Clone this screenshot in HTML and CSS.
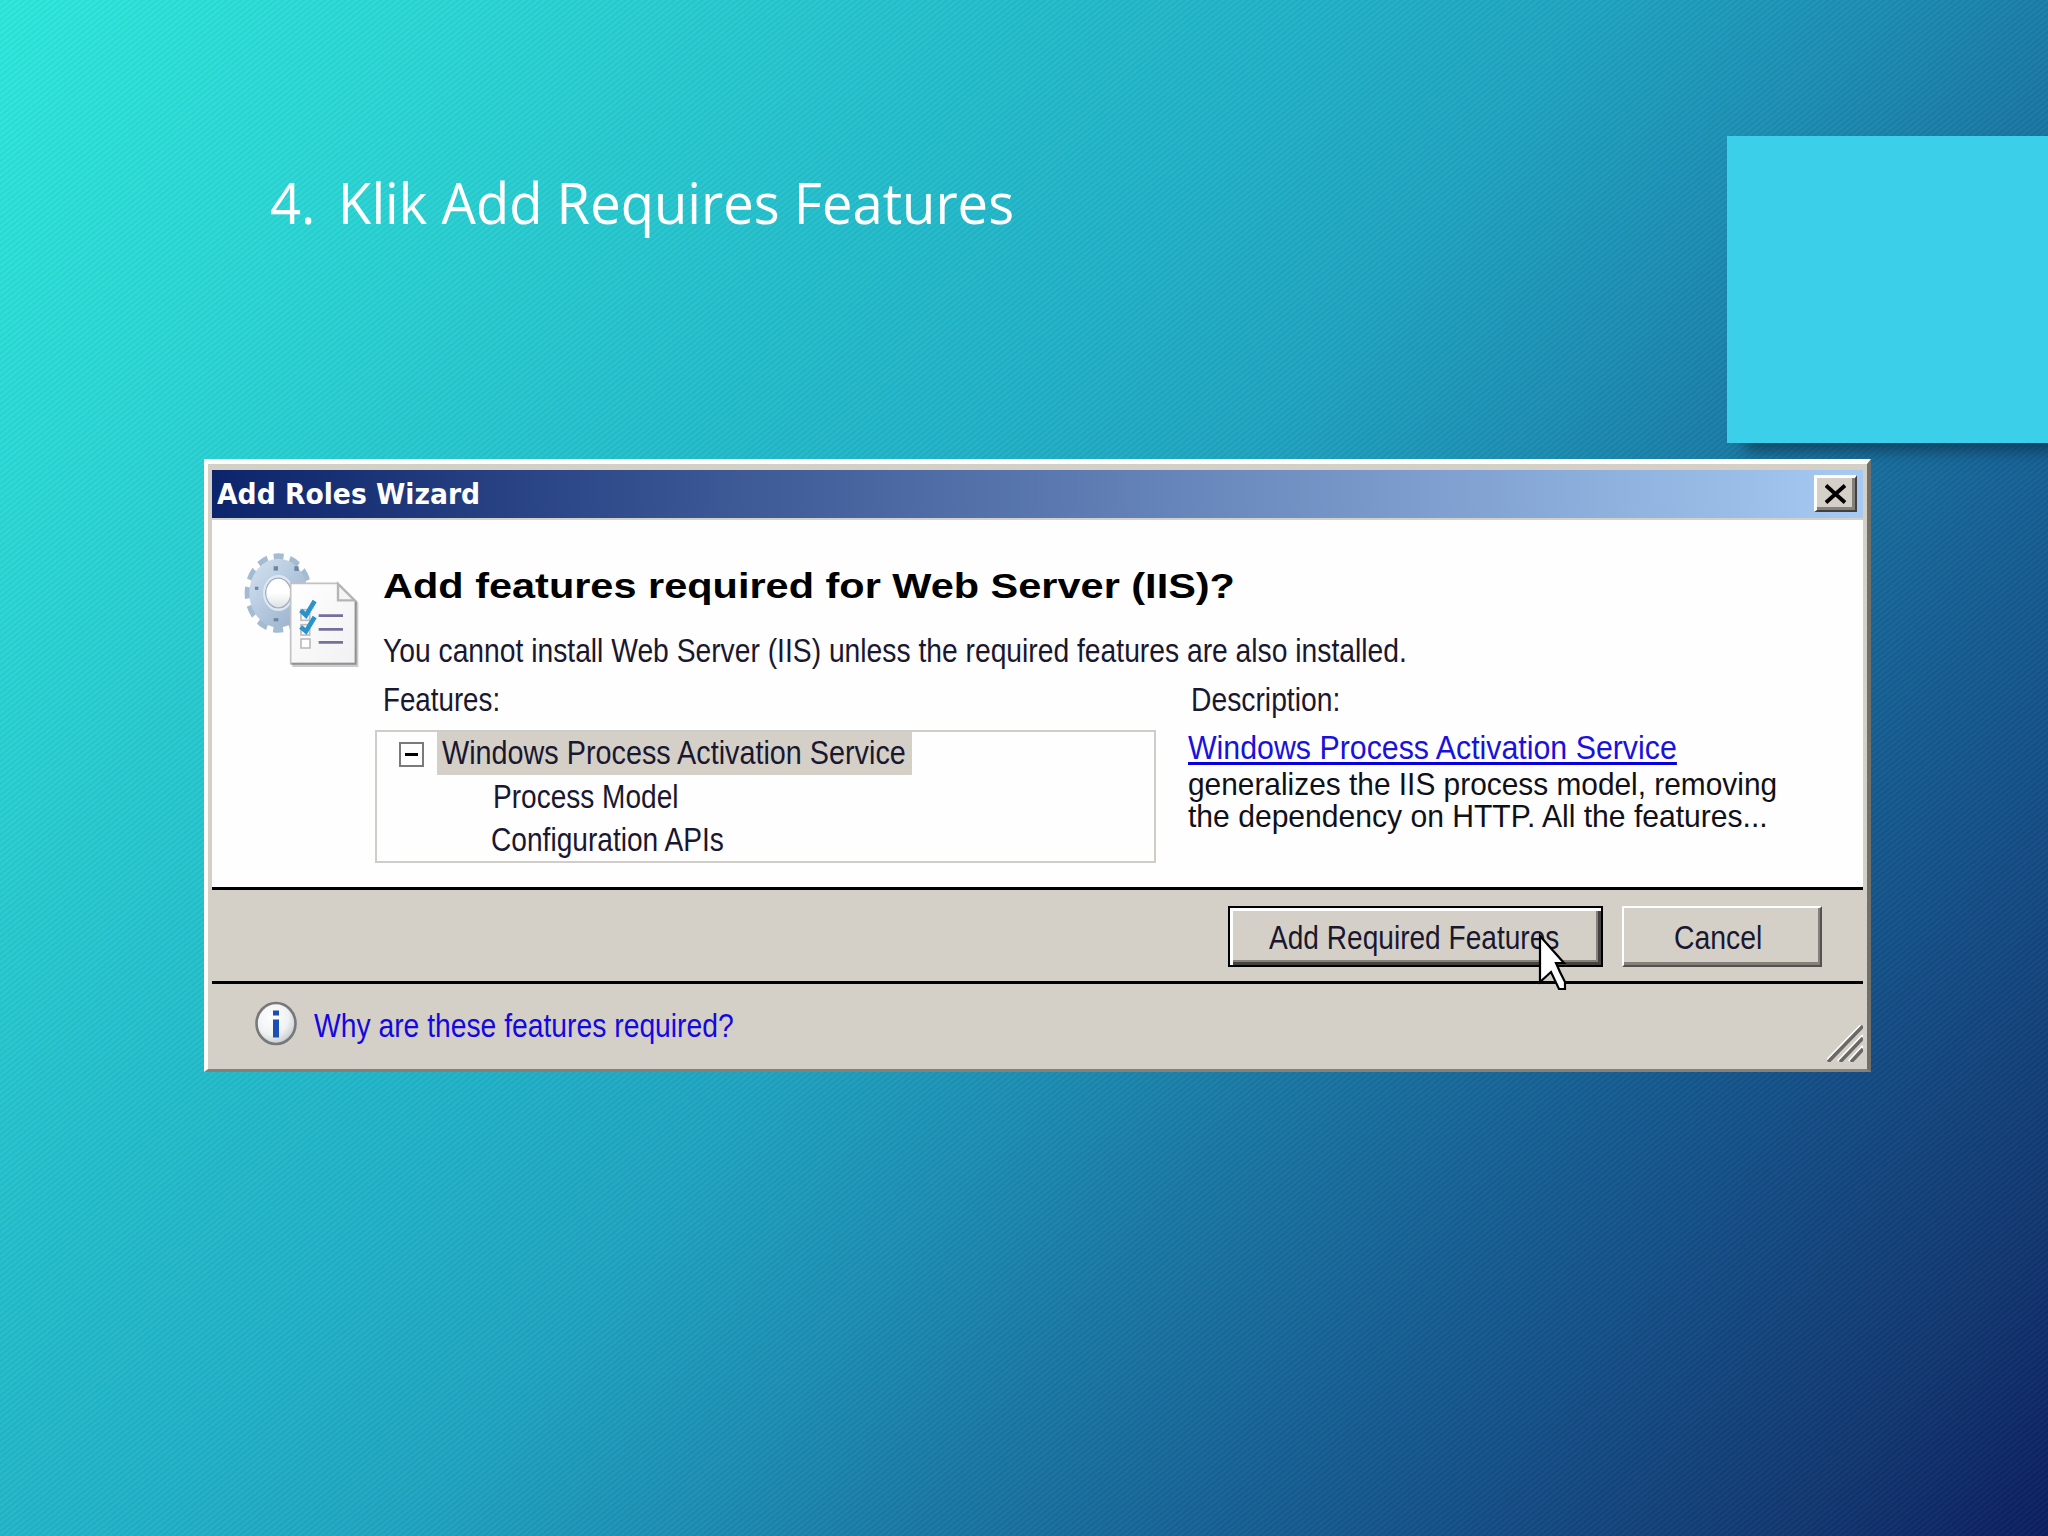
FILE: index.html
```html
<!DOCTYPE html>
<html lang="id">
<head>
<meta charset="utf-8">
<title>Add Requires Features</title>
<link rel="stylesheet" href="styles.css">
</head>
<body>
<main class="slide">
  <div class="accent"></div>
  <h1 class="slide-title"><span class="fit fit-title"><span class="number">4.</span> Klik Add Requires Features</span></h1>

  <section class="dialog">
    <header class="titlebar">
      <span class="fit fit-caption">Add Roles Wizard</span>
      <button class="close" aria-label="Close">
        <svg width="22" height="20" viewBox="0 0 22 20"><path d="M1 1.500L20 18.500M20 1.500L1 18.500" stroke="#000" stroke-width="3.800" fill="none"/></svg>
      </button>
    </header>

    <div class="body">
      <svg class="wizard-icon" width="140" height="140" viewBox="0 0 420 420">
        <defs>
          <linearGradient id="metal" x1="0" y1="0" x2="1" y2="1"><stop offset="0" stop-color="#cddcec"/><stop offset=".5" stop-color="#b3c8de"/><stop offset="1" stop-color="#9db4cd"/></linearGradient>
          <linearGradient id="paper" x1="0" y1="0" x2="1" y2="1"><stop offset="0" stop-color="#fff"/><stop offset="1" stop-color="#f1f1f3"/></linearGradient>
          <linearGradient id="hole" x1="0" y1="0" x2="0" y2="1"><stop offset=".5" stop-color="#fff"/><stop offset="1" stop-color="#dcdfe3"/></linearGradient>
        </defs>
        <g transform="translate(145 159) scale(1 1.180)">
          <circle r="91" fill="none" stroke="#a5bbd2" stroke-width="20" stroke-dasharray="29 18.650" transform="rotate(-9)"/>
          <circle r="64" fill="none" stroke="url(#metal)" stroke-width="46"/>
          <circle r="38" fill="url(#hole)" stroke="#9fb0c2" stroke-width="4"/>
          <circle r="43" fill="none" stroke="#dde7f0" stroke-width="6"/>
          <g fill="#6d859e"><rect x="-14" y="-68" width="13" height="11"/><rect x="-70" y="-16" width="10" height="8"/><rect x="-14" y="64" width="14" height="8"/><rect x="48" y="-68" width="13" height="12"/></g>
        </g>
        <path d="M187 137H331L385 188V381H187Z" fill="#999" opacity=".5"/>
        <path d="M182 130H324L377 184V371H182Z" fill="url(#paper)" stroke="#c2c2c2" stroke-width="5"/>
        <path d="M377 184V371H184" fill="none" stroke="#929292" stroke-width="6"/>
        <path d="M324 132V181H374Z" fill="#f5f5f5" stroke="#b4b4b4" stroke-width="7"/>
        <g fill="#fff" stroke="#bcbcbc" stroke-width="5"><rect x="213" y="209" width="26" height="32"/><rect x="213" y="254" width="26" height="31"/><rect x="213" y="297" width="27" height="27"/></g>
        <g fill="none" stroke="#2b93cb" stroke-width="14"><path d="M212 211L228 226L254 183"/><path d="M212 261L228 274L254 231"/></g>
        <path d="M266 227H339M266 268H339M266 307H339" stroke="#74709a" stroke-width="8"/>
      </svg>

      <div class="content">
        <h2 class="heading"><span class="fit fit-heading">Add features required for Web Server (IIS)?</span></h2>
        <p class="line message"><span class="fit fit-message">You cannot install Web Server (IIS) unless the required features are also installed.</span></p>
        <div class="columns">
          <div>
            <p class="line label"><span class="fit fit-features">Features:</span></p>
            <ul class="tree">
              <li class="row"><span class="toggle"></span><span class="selected"><span class="fit fit-node">Windows Process Activation Service</span></span></li>
              <li class="row child"><span class="fit fit-model">Process Model</span></li>
              <li class="row child"><span class="fit fit-config">Configuration APIs</span></li>
            </ul>
          </div>
          <div>
            <p class="line desc-label"><span class="fit fit-desc">Description:</span></p>
            <p class="line desc-link"><a class="fit fit-link">Windows Process Activation Service</a></p>
            <p class="desc-line"><span class="fit fit-d1">generalizes the IIS process model, removing</span></p>
            <p class="desc-line"><span class="fit fit-d2">the dependency on HTTP. All the features...</span></p>
          </div>
        </div>
      </div>
    </div>

    <div class="actions">
      <button class="btn primary"><span class="fit fit-add">Add Required Features</span></button>
      <button class="btn"><span class="fit fit-cancel">Cancel</span></button>
    </div>

    <footer class="help">
      <svg width="44" height="45" viewBox="0 0 44 45">
        <defs><radialGradient id="glass" cx=".4" cy=".35" r=".7"><stop offset="0" stop-color="#fff"/><stop offset=".6" stop-color="#f0f1f3"/><stop offset="1" stop-color="#c2c5ca"/></radialGradient></defs>
        <ellipse cx="22" cy="22.500" rx="19.500" ry="20.500" fill="url(#glass)" stroke="#77787a" stroke-width="2.600"/>
        <path d="M19 9.500h6v5h-6zM19 18.500h6v18h-6z" fill="#1c4fb4"/>
      </svg>
      <a class="help-link"><span class="fit fit-help">Why are these features required?</span></a>
      <svg class="grip" width="36" height="37" viewBox="0 0 36 37">
        <path d="M-1 36L36 -2M11 36L36 10M22 36L36 21" stroke="#fff" stroke-width="2.500"/>
        <path d="M1 37L36 1M13 37L36 13M24 37L36 24" stroke="#6b6966" stroke-width="3.600"/>
      </svg>
    </footer>
  </section>

  <svg class="cursor" width="32" height="60" viewBox="0 0 32 60">
    <path d="M2 3L26 30H18L22 39L27 49V56H21L13 39L2 49Z" fill="#fff" stroke="#000" stroke-width="2.200"/>
  </svg>
</main>
</body>
</html>
```

FILE: styles.css
```css
* { box-sizing: border-box; margin: 0; padding: 0; }

body { width: 2048px; height: 1536px; overflow: hidden; }

.slide {
  position: relative;
  width: 2048px;
  height: 1536px;
  padding: 162px 0 0 204px;
  background:
    repeating-linear-gradient(141deg, rgba(255,255,255,.04) 0, rgba(0,20,60,.05) 2.2px, rgba(255,255,255,.04) 4.4px),
    linear-gradient(128deg, #2ce9dc 0%, #28d1d2 18.5%, #22bdcb 32%, #20b3c8 40%, #1ea5c1 49%, #1b90b4 57%, #1878a3 65%, #156396 73%, #124b83 83%, #10366f 92%, #0a1c5e 100%);
  font-family: "Liberation Sans", Arial, sans-serif;
  color: #1a1730;
}

.accent {
  position: absolute;
  top: 136px;
  right: 0;
  width: 321px;
  height: 307px;
  background: #3ccfea;
  box-shadow: 14px 12px 14px -4px rgba(10,40,60,.6);
}

.fit { display: inline-block; white-space: pre; transform-origin: 0 50%; }
.fit-title { transform: scaleX(.954); }
.fit-caption { transform: scaleX(1.02); }
.fit-heading { transform: scaleX(1.185); }
.fit-message { transform: scaleX(.856); }
.fit-features { transform: scaleX(.84); }
.fit-node { transform: scaleX(.872); }
.fit-model { transform: scaleX(.85); }
.fit-config { transform: translateX(-2px) scaleX(.852); }
.fit-desc { transform: scaleX(.857); }
.fit-link { transform: scaleX(.919); }
.fit-d1 { transform: scaleX(.933); }
.fit-d2 { transform: scaleX(.94); }
.fit-add { transform: scaleX(.851); }
.fit-cancel { transform: scaleX(.86); }
.fit-help { transform: scaleX(.857); }

.slide-title {
  height: 80px;
  padding-left: 66px;
  font: 500 57px/80px "Open Sans", sans-serif;
  color: #fff;
}
.number { margin-right: 9px; }

.dialog {
  position: relative;
  width: 1667px;
  height: 613px;
  margin-top: 217px;
  padding: 6px 4px 4px 4px;
  background: #d4d0c8;
  border: solid;
  border-width: 5px 4px 3px 4px;
  border-color: #fdfdfb #716f6a #85817a #fdfdfb;
}

.titlebar {
  display: flex;
  align-items: center;
  justify-content: space-between;
  height: 48px;
  padding: 0 6px 0 5px;
  background: linear-gradient(90deg, #0c246b, #a6caf2);
  color: #fff;
  font: 700 29px/48px "DejaVu Sans Condensed", "DejaVu Sans", sans-serif;
}

.close {
  display: grid;
  place-items: center;
  width: 43px;
  height: 37px;
  margin-top: -2px;
  background: #d4d0c8;
  border: solid;
  border-width: 3px 2px 2px 3px;
  border-color: #fff #404040 #404040 #fff;
  box-shadow: inset -3px -3px #85817a;
}

.body {
  display: grid;
  grid-template-columns: 163px 1fr;
  height: 367px;
  margin-top: 2px;
  background: #fefefe;
}

.wizard-icon { margin: 20px 0 0 18px; }

.content { padding-top: 44px; }

.heading { padding-left: 8px; font: 700 35px/44px "Liberation Sans", Arial, sans-serif; color: #000; }

.line { height: 40px; font-size: 33px; line-height: 40px; }

.message { margin-top: 23px; padding-left: 8px; }

.columns {
  display: grid;
  grid-template-columns: 781px 1fr;
  column-gap: 32px;
  margin-top: 9px;
}

.label { padding-left: 8px; }
.desc-label { padding-left: 3px; }

.tree {
  height: 133px;
  margin-top: 10px;
  border: 2px solid #d0cdc8;
  list-style: none;
  font-size: 33px;
}

.row { display: flex; align-items: center; height: 43px; line-height: 42px; }
.child { padding-left: 116px; }

.toggle {
  display: grid;
  place-items: center;
  width: 25px;
  height: 25px;
  margin: 2px 13px 0 22px;
  border: 2px solid #7c7a78;
}
.toggle::before { content: ""; width: 13px; height: 3px; background: #000; }

.selected { width: 475px; height: 43px; padding-left: 5px; background: #d4d0c8; }

.desc-link { margin-top: 8px; color: #1a12dc; }
.desc-link a { border-bottom: 3px solid #0800e0; height: 37px; }
.desc-line { height: 32px; font-size: 32px; line-height: 32px; color: #101018; }

.actions {
  display: flex;
  justify-content: flex-end;
  gap: 19px;
  height: 97px;
  padding: 16px 41px 0 0;
  border-top: 3px solid #000;
  border-bottom: 3px solid #000;
}

.btn {
  width: 200px;
  height: 61px;
  padding: 2px 0 0 50px;
  background: #d4d0c8;
  border: solid;
  border-width: 2px;
  border-color: #fff #55524e #55524e #fff;
  box-shadow: inset -2px -3px #85817a;
  font: 33px/52px "Liberation Sans", Arial, sans-serif;
  color: #1a1730;
  text-align: left;
}

.primary {
  width: 375px;
  padding-left: 39px;
  border-color: #000;
  box-shadow: inset 3px 3px #fff, inset -3px -3px #45423f, inset -5px -5px #85817a;
}

.help { display: flex; height: 81px; padding: 17px 0 0 42px; }

.help-link { padding: 2px 0 0 16px; font-size: 33px; line-height: 45px; color: #1408e0; }

.grip { margin: 24px 0 0 auto; }

.cursor { position: absolute; left: 1538px; top: 933px; }
```
